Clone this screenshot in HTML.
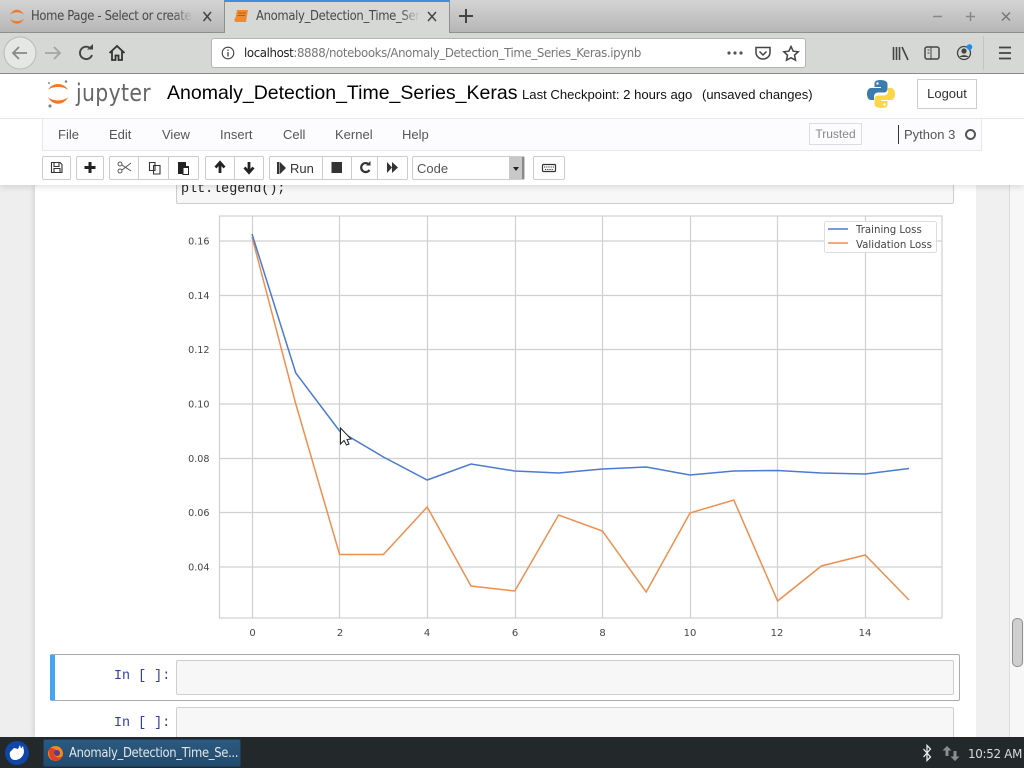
<!DOCTYPE html>
<html><head><meta charset="utf-8">
<style>
html,body{margin:0;padding:0;width:1024px;height:768px;overflow:hidden;background:#eee;font-family:"Liberation Sans",sans-serif;}
.a{position:absolute;white-space:nowrap;}
.btn{position:absolute;top:156px;height:24px;border:1px solid #ccc;background:#fff;box-sizing:border-box;}
svg{position:absolute;overflow:visible;}
.sx{display:inline-block;transform-origin:0 0;transform:scaleX(.89);}
.fade{-webkit-mask-image:linear-gradient(90deg,#000 88%,transparent);mask-image:linear-gradient(90deg,#000 88%,transparent);}
</style></head><body>
<div class="a" style="left:0;top:0;width:1024px;height:768px;overflow:hidden">

<!-- notebook page -->
<div class="a" style="left:0;top:185px;width:1024px;height:553px;background:#eee"></div>
<div class="a" style="left:35px;top:185px;width:941px;height:553px;background:#fff;box-shadow:0 0 6px rgba(0,0,0,.18)"></div>
<div class="a" style="left:976px;top:185px;width:48px;height:553px;background:#f0f0f0"></div>
<div class="a" style="left:1009px;top:185px;width:1px;height:553px;background:#ddd"></div>
<div class="a" style="left:1010px;top:185px;width:14px;height:553px;background:#f7f7f7"></div>
<div class="a" style="left:1012px;top:618px;width:9px;height:47px;background:#cfcfcf;border:1px solid #8e8e8e;border-radius:5px"></div>

<!-- code cell tail -->
<div class="a" style="left:176px;top:170px;width:778px;height:34px;box-sizing:border-box;background:#f7f7f7;border:1px solid #cfcfcf;border-radius:2px"></div>
<div class="a" style="left:181px;top:182px;font:13.4px/16px 'Liberation Mono',monospace;color:#222">plt.legend();</div>

<!-- chart -->
<svg style="left:0;top:0" width="1024" height="768" font-family="DejaVu Sans, sans-serif" font-size="10.2" fill="#444">
<g stroke="#d0d0d0" stroke-width="1.2" fill="none">
<path d="M252.5 216V618M339.5 216V618M427.5 216V618M515.5 216V618M602.5 216V618M690.5 216V618M777.5 216V618M865.5 216V618"/>
<path d="M220 241H942M220 295.5H942M220 349.5H942M220 404H942M220 458.5H942M220 512.5H942M220 567H942"/>
<rect x="219.5" y="216" width="722.5" height="402"/>
</g>
<polyline fill="none" stroke="#ee8f4f" stroke-width="1.5" points="252,237 295.8,404 339.6,554.5 383.4,554.5 427.2,507 471,586 514.8,591 558.6,515 602.4,531 646.2,592 690,513 733.8,500 777.6,601 821.4,566 865.2,555 909,600"/>
<polyline fill="none" stroke="#4a7bd0" stroke-width="1.5" points="252,234 295.8,373 339.6,431 383.4,457 427.2,480 471,464 514.8,471 558.6,473 602.4,469 646.2,467 690,475 733.8,471 777.6,470.5 821.4,473 865.2,474 909,468.5"/>
<g text-anchor="end" font-size="9.6">
<text x="209.5" y="244.5">0.16</text><text x="209.5" y="299">0.14</text><text x="209.5" y="353">0.12</text><text x="209.5" y="407.5">0.10</text><text x="209.5" y="462">0.08</text><text x="209.5" y="516">0.06</text><text x="209.5" y="570.5">0.04</text>
</g>
<g text-anchor="middle" font-size="10">
<text x="252.5" y="636">0</text><text x="340" y="636">2</text><text x="427" y="636">4</text><text x="515" y="636">6</text><text x="602.5" y="636">8</text><text x="690" y="636">10</text><text x="777" y="636">12</text><text x="865" y="636">14</text>
</g>
<rect x="824.5" y="221.5" width="112" height="31" rx="2" fill="#fff" fill-opacity=".9" stroke="#ddd"/>
<path d="M828 229H848" stroke="#4a7bd0" stroke-width="1.5"/>
<path d="M828 243H848" stroke="#ee8f4f" stroke-width="1.5"/>
<text x="856" y="233">Training Loss</text>
<text x="856" y="248">Validation Loss</text>
<path d="M340.5 428V444L344 440.5L346.5 445L349 444L347 439.5L351 439Z" fill="#fff" stroke="#222" stroke-width="1"/>
</svg>

<!-- empty cells -->
<div class="a" style="left:50px;top:654px;width:910px;height:47px;box-sizing:border-box;border:1px solid #ababab;border-left:5px solid #42a5f5;border-radius:2px"></div>
<div class="a" style="left:176px;top:660px;width:778px;height:35px;box-sizing:border-box;background:#f7f7f7;border:1px solid #cfcfcf;border-radius:2px"></div>
<div class="a" style="left:114px;top:669px;font:13.4px/16px 'Liberation Mono',monospace;color:#303f9f">In [ ]:</div>
<div class="a" style="left:176px;top:707px;width:778px;height:35px;box-sizing:border-box;background:#f7f7f7;border:1px solid #cfcfcf;border-radius:2px"></div>
<div class="a" style="left:114px;top:716px;font:13.4px/16px 'Liberation Mono',monospace;color:#303f9f">In [ ]:</div>

<!-- jupyter header -->
<div class="a" style="left:0;top:74px;width:1024px;height:111px;background:#fff;box-shadow:0 2px 6px rgba(0,0,0,.12)"></div>
<svg style="left:46px;top:79px" width="26" height="30">
<path d="M2 11C6 3 18 3 22 11C18 7 6 7 2 11Z" fill="#f37726"/>
<path d="M2 18C6 27 18 27 22 18C18 22.500 6 22.500 2 18Z" fill="#f37726"/>
<circle cx="20" cy="2.500" r="1.300" fill="#888"/><circle cx="3" cy="4" r="1" fill="#888"/><circle cx="4" cy="27" r="1.600" fill="#888"/>
</svg>
<div class="a" style="left:76px;top:78px;font:24px/30px 'DejaVu Sans',sans-serif;color:#666;letter-spacing:.4px;transform-origin:0 0;transform:scaleX(.85)">jupyter</div>
<div class="a" style="left:167px;top:81px;font:19.5px/24px 'Liberation Sans',sans-serif;color:#000">Anomaly_Detection_Time_Series_Keras</div>
<div class="a" style="left:522px;top:86px;font:13.1px/17px 'Liberation Sans',sans-serif;color:#111">Last Checkpoint: 2 hours ago</div>
<div class="a" style="left:702px;top:86px;font:13px/17px 'Liberation Sans',sans-serif;color:#111">(unsaved changes)</div>
<svg style="left:867px;top:80px" width="28" height="28" viewBox="0 0 28 28">
<path d="M13.500 0C8 0 7.500 2 7.500 4V7H14V8H4C1.500 8 0 10.500 0 14C0 17.500 1.500 20 4 20H7V16.500C7 14 9 12.500 11 12.500H17C19 12.500 20.500 11 20.500 9V4C20.500 2 18.500 0 13.500 0Z" fill="#3d7bad"/>
<circle cx="10.500" cy="3.500" r="1.200" fill="#fff"/>
<path d="M14.500 28C20 28 20.500 26 20.500 24V21H14V20H24C26.500 20 28 17.500 28 14C28 10.500 26.500 8 24 8H21V11.500C21 14 19 15.500 17 15.500H11C9 15.500 7.500 17 7.500 19V24C7.500 26 9.500 28 14.500 28Z" fill="#ffd548"/>
<circle cx="17.500" cy="24.500" r="1.200" fill="#fff"/>
</svg>
<div class="a" style="left:917px;top:79px;width:60px;height:30px;box-sizing:border-box;border:1px solid #ccc;font:13px/28px 'Liberation Sans',sans-serif;color:#333;text-align:center">Logout</div>

<!-- menu bar -->
<div class="a" style="left:0;top:118px;width:1024px;height:1px;background:#e7e7e7"></div>
<div class="a" style="left:42px;top:118px;width:940px;height:33px;box-sizing:border-box;background:#fcfbfd;border:1px solid #e7e7e7"></div>
<div class="a" style="left:58px;top:127px;font:13px/15px 'Liberation Sans',sans-serif;color:#555">File</div>
<div class="a" style="left:109px;top:127px;font:13px/15px 'Liberation Sans',sans-serif;color:#555">Edit</div>
<div class="a" style="left:162px;top:127px;font:13px/15px 'Liberation Sans',sans-serif;color:#555">View</div>
<div class="a" style="left:220px;top:127px;font:13px/15px 'Liberation Sans',sans-serif;color:#555">Insert</div>
<div class="a" style="left:283px;top:127px;font:13px/15px 'Liberation Sans',sans-serif;color:#555">Cell</div>
<div class="a" style="left:335px;top:127px;font:13px/15px 'Liberation Sans',sans-serif;color:#555">Kernel</div>
<div class="a" style="left:402px;top:127px;font:13px/15px 'Liberation Sans',sans-serif;color:#555">Help</div>
<div class="a" style="left:809px;top:123px;width:53px;height:22px;box-sizing:border-box;border:1px solid #ddd;font:12px/20px 'Liberation Sans',sans-serif;color:#888;text-align:center">Trusted</div>
<div class="a" style="left:898px;top:125px;width:1px;height:19px;background:#333"></div>
<div class="a" style="left:904px;top:127px;font:13px/15px 'Liberation Sans',sans-serif;color:#555">Python 3</div>
<div class="a" style="left:965px;top:129px;width:11px;height:11px;box-sizing:border-box;border:2px solid #555;border-radius:50%"></div>

<!-- toolbar -->
<div class="btn" style="left:42px;width:29px;border-radius:2px"></div>
<div class="btn" style="left:76px;width:28px;border-radius:2px"></div>
<div class="btn" style="left:109px;width:30px;border-radius:2px 0 0 2px"></div>
<div class="btn" style="left:138px;width:31px"></div>
<div class="btn" style="left:168px;width:31px;border-radius:0 2px 2px 0"></div>
<div class="btn" style="left:205px;width:30px;border-radius:2px 0 0 2px"></div>
<div class="btn" style="left:234px;width:30px;border-radius:0 2px 2px 0"></div>
<div class="btn" style="left:269px;width:54px;border-radius:2px 0 0 2px"></div>
<div class="btn" style="left:322px;width:30px"></div>
<div class="btn" style="left:351px;width:27px"></div>
<div class="btn" style="left:377px;width:31px;border-radius:0 2px 2px 0"></div>
<div class="btn" style="left:412px;width:113px;border-radius:2px"></div>
<div class="a" style="left:417px;top:161px;font:13px/16px 'Liberation Sans',sans-serif;color:#555">Code</div>
<div class="a" style="left:509px;top:157px;width:15px;height:22px;background:#c8c8c8;border-right:2px solid #888;box-sizing:border-box"></div>
<div class="a" style="left:513px;top:167px;width:0;height:0;border-left:3px solid transparent;border-right:3px solid transparent;border-top:4px solid #222"></div>
<div class="btn" style="left:533px;width:32px;border-radius:2px"></div>
<svg style="left:0;top:0" width="1024" height="200">
<path d="M51.500 162.500H60L62 164.500V172.500H51.500ZM54 162.500V166.500H59V162.500M54 172.500V168.500H60V172.500" fill="none" stroke="#333" stroke-width="1.100"/>
<path d="M90 162V173M84.500 167.500H95.500" stroke="#222" stroke-width="3"/>
<g fill="none" stroke="#555" stroke-width="1"><circle cx="120" cy="164" r="2"/><circle cx="120" cy="171" r="2"/><path d="M122 165L131 171M122 170L131 163"/></g>
<path d="M149.500 162.500H155V170.500H149.500ZM153.500 165.500H160V174H153.500Z" fill="#fff" stroke="#333" stroke-width="1.100"/>
<path d="M178 162H186V166H189V174H178Z" fill="#222"/><path d="M183 167.500H188.500V174.500H183Z" fill="#fff" stroke="#222"/>
<path d="M220 173V163M215.500 167.500L220 162.500L224.500 167.500" fill="none" stroke="#222" stroke-width="2.800"/>
<path d="M249 162V172M244.500 167.500L249 172.500L253.500 167.500" fill="none" stroke="#222" stroke-width="2.800"/>
<path d="M277 162V174H279.500V162ZM280 162V174L286 168Z" fill="#333"/>
<rect x="331.500" y="162" width="10.500" height="11" fill="#333"/>
<path d="M369 164.500A4.500 4.500 0 1 0 369.500 170" fill="none" stroke="#333" stroke-width="2.200"/><path d="M366 165.500H370.500V161Z" fill="#333"/>
<path d="M387 162V173L392 167.500ZM392 162V173L398 167.500Z" fill="#333"/>
<rect x="542.500" y="164.500" width="13" height="7" rx="1" fill="none" stroke="#333" stroke-width="1.200"/><path d="M544 167H554M545 169.500H553" stroke="#333" stroke-dasharray="1 .8"/>
</svg>
<div class="a" style="left:290px;top:161px;font:13px/16px 'Liberation Sans',sans-serif;color:#333">Run</div>

<!-- browser chrome -->
<div class="a" style="left:0;top:0;width:1024px;height:33px;background:linear-gradient(#d4d4d4,#b5b5b5)"></div>
<div class="a" style="left:0;top:32px;width:1024px;height:1px;background:#8f8f8f"></div>
<div class="a" style="left:0;top:33px;width:1024px;height:41px;background:#d5d8d5"></div>
<div class="a" style="left:0;top:73px;width:1024px;height:1px;background:#8a8a8a"></div>
<div class="a" style="left:224px;top:0;width:226px;height:33px;box-sizing:border-box;background:#d5d8d5;border-left:1px solid #8f8f8f;border-right:1px solid #8f8f8f;border-top:2px solid #3e8ee0"></div>
<svg style="left:8px;top:7px" width="20" height="20">
<path d="M2 8C5 1 13 1 16 8C13 4.500 5 4.500 2 8Z" fill="#ef7a2a"/><path d="M2 11.500C5 18.500 13 18.500 16 11.500C13 15 5 15 2 11.500Z" fill="#ef7a2a"/>
</svg>
<div class="a fade" style="left:31px;top:9px;width:162px;overflow:hidden;font:13px/16px 'DejaVu Sans',sans-serif;color:#484848;letter-spacing:-.35px"><span class="sx">Home Page - Select or create</span></div>
<svg style="left:0;top:0" width="1024" height="74">
<path d="M203.500 12L211 21M211 12L203.500 21" stroke="#444" stroke-width="1.500"/>
<path d="M428 12L436 21M436 12L428 21" stroke="#444" stroke-width="1.500"/>
<path d="M237 10H248L246 22H236C234 22 234 18 235.500 18Z" fill="#ef8a2e"/><path d="M238 13H246M237.500 15.500H245" stroke="#b85d10"/>
<path d="M466 9V23M459 16H473" stroke="#444" stroke-width="2"/>
<path d="M933 16.500H942" stroke="#888" stroke-width="1.500"/>
<path d="M966 16.500H975M970.500 12V21" stroke="#888" stroke-width="1.500"/>
<path d="M1002 12.500L1010 20.500M1010 12.500L1002 20.500" stroke="#777" stroke-width="1.500"/>
<circle cx="20" cy="53" r="16" fill="#e4e7e4" stroke="#b8b8b8"/>
<path d="M27 53H13M19 47L13 53L19 59" fill="none" stroke="#888" stroke-width="1.800"/>
<path d="M45 53H60M54 47L60 53L54 59" fill="none" stroke="#a5a5a5" stroke-width="1.800"/>
<path d="M91 49A6.200 6.200 0 1 0 92 55" fill="none" stroke="#444" stroke-width="1.900"/><path d="M87 49.500H93V44Z" fill="#444"/>
<path d="M109.500 53L117 46L124.500 53M112 51V60H115.500V55.500H118.500V60H122V51" fill="none" stroke="#333" stroke-width="1.800"/>
<path d="M893.500 47V60M896.500 47V60M899.500 47V60M902 47L908 60" stroke="#444" stroke-width="1.600"/>
<rect x="925" y="47" width="14" height="12" rx="2" fill="none" stroke="#444" stroke-width="1.500"/><path d="M931 47V59M927.500 50H929.500M927.500 53H929.500" stroke="#444"/>
<circle cx="964" cy="53" r="6.500" fill="none" stroke="#444" stroke-width="1.300"/><circle cx="964" cy="51" r="2.600" fill="#444"/><path d="M959.500 57C961 54.500 967 54.500 968.500 57Z" fill="#444"/>
<circle cx="969.500" cy="47" r="2.800" fill="#1a8cf0"/>
<path d="M983.500 36V70" stroke="#c2c5c2"/>
<path d="M999 47.500H1011M999 53H1011M999 58.500H1011" stroke="#444" stroke-width="1.800"/>
</svg>
<div class="a fade" style="left:256px;top:9px;width:164px;overflow:hidden;font:13px/16px 'DejaVu Sans',sans-serif;color:#484848;letter-spacing:-.35px"><span class="sx">Anomaly_Detection_Time_Series_Keras</span></div>
<div class="a" style="left:211px;top:38px;width:595px;height:30px;box-sizing:border-box;background:#fff;border:1px solid #b4b4b4;border-radius:3px"></div>
<div class="a" style="left:244px;top:45px;font:12.300px/16px 'DejaVu Sans',sans-serif;color:#777;letter-spacing:-.42px;transform-origin:0 0;transform:scaleX(.96)"><span style="color:#222">localhost</span>:8888/notebooks/Anomaly_Detection_Time_Series_Keras.ipynb</div>
<svg style="left:0;top:0" width="1024" height="74"><circle cx="228" cy="53" r="5.800" fill="none" stroke="#444" stroke-width="1.100"/><path d="M228 52V56.500M228 49.500V51" stroke="#444" stroke-width="1.300"/><circle cx="729" cy="53" r="1.600" fill="#555"/><circle cx="735" cy="53" r="1.600" fill="#555"/><circle cx="741" cy="53" r="1.600" fill="#555"/><path d="M756 47.500H770V52.500C770 56 767 59 763 59C759 59 756 56 756 52.500ZM759.500 51.500L763 55L766.500 51.500" fill="none" stroke="#444" stroke-width="1.500"/><path d="M791 46.500L793.200 51.200L798.200 51.800L794.500 55.200L795.500 60.200L791 57.700L786.500 60.200L787.500 55.200L783.800 51.800L788.800 51.200Z" fill="none" stroke="#444" stroke-width="1.500"/></svg>

<!-- taskbar -->
<div class="a" style="left:0;top:737px;width:1024px;height:31px;background:#23282a"></div>
<svg style="left:0;top:0" width="1024" height="768">
<circle cx="17" cy="753" r="12" fill="#0f47a8"/>
<path d="M10 752L14 748L18 749L20 745L21 748.500L23 746L24 751C24 756 20 760 15 760C11 760 9 756 10 752Z" fill="#fff"/>
<path d="M923.500 749L930.500 757L927 760.500V745.500L930.500 749L923.500 757" fill="none" stroke="#e8e8e8" stroke-width="1.300"/>
<path d="M947 746L942.500 750.500H945.500V756H948.500V750.500H951.500ZM955 761L950.500 756.500H953.500V751H956.500V756.500H959.500Z" fill="#8a8f90"/>
</svg>
<div class="a" style="left:43px;top:739px;width:198px;height:28px;box-sizing:border-box;background:linear-gradient(#2c5a80,#224a6c);border:1px solid #1e3d58;border-radius:2px"></div>
<svg style="left:47px;top:745px" width="18" height="18"><circle cx="8.500" cy="8.500" r="7.500" fill="#f08a1d"/><path d="M3 3C1 7 2 13 6 15.500C11 17 15 14 16 10C14 13 10 13 8 11C6 9 7 6 10 5.500C8 3.500 5 3 3 3Z" fill="#e0402a"/><circle cx="10" cy="8" r="3" fill="#5a3a8c"/></svg>
<div class="a" style="left:69px;top:746px;font:13px/16px 'DejaVu Sans',sans-serif;color:#e3e6e8;letter-spacing:-.36px;transform-origin:0 0;transform:scaleX(.89)">Anomaly_Detection_Time_Se...</div>
<div class="a" style="left:968px;top:746px;font:12.500px/16px 'DejaVu Sans',sans-serif;color:#d8dcde;letter-spacing:-.3px;transform-origin:0 0;transform:scaleX(.95)">10:52 AM</div>
</div>
</body></html>
